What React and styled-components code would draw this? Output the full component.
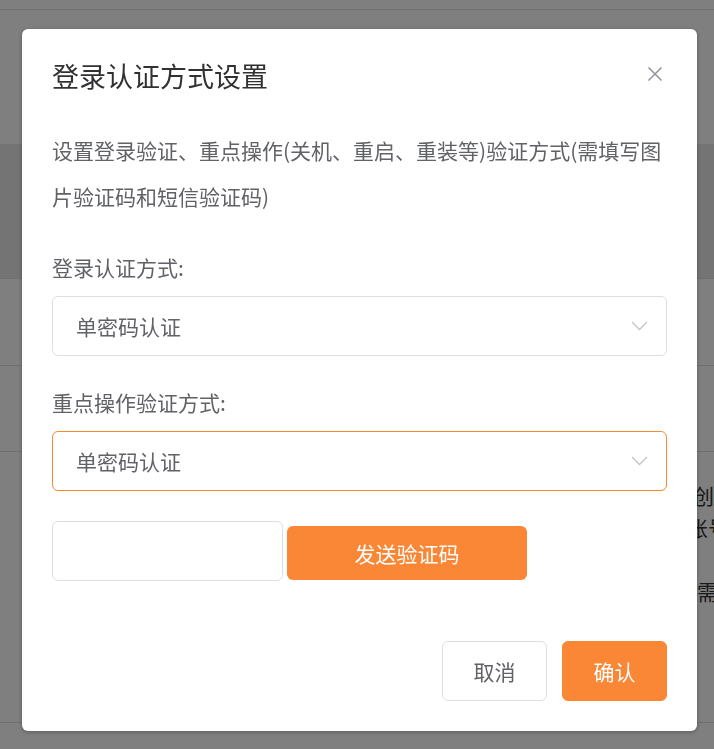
import React from 'react';
import styled, { createGlobalStyle } from 'styled-components';

const Global = createGlobalStyle`
  html, body { margin: 0; padding: 0; background: #fff; }
  body { font-family: "Noto Sans CJK SC", "Noto Sans", sans-serif; }
  * { box-sizing: border-box; }
`;

const ORANGE = '#fa8736';

/* underlying page */
const Page = styled.div`
  width: 714px;
  min-height: 749px;
  background: #fff;
  display: flex;
  flex-direction: column;
`;
const PageTop = styled.div`
  height: 10px;
  border-bottom: 1px solid #dcdcdc;
`;
const PageIntro = styled.div`
  height: 134px;
`;
const PageBand = styled.div`
  height: 135px;
  background: #e9e9e9;
  border-bottom: 1px solid #dcdfe6;
`;
const PageRow = styled.div`
  height: ${(p) => p.$h}px;
  border-bottom: 1px solid #dcdfe6;
  display: flex;
  flex-direction: column;
  padding-top: ${(p) => p.$pt || 0}px;
  overflow: hidden;
`;
const PageLine = styled.div`
  padding-left: ${(p) => p.$indent}px;
  height: 32px;
  font-size: 21px;
  line-height: 32px;
  color: #333;
  white-space: nowrap;
`;

/* modal */
const Overlay = styled.div`
  position: fixed;
  inset: 0;
  background: rgba(0, 0, 0, 0.5);
  display: flex;
  align-items: flex-start;
  padding: 29px 0 0 22px;
`;
const Dialog = styled.div`
  width: 675px;
  background: #fff;
  border-radius: 6px;
  box-shadow: 0 1px 4px rgba(0, 0, 0, 0.3);
  padding: 30px;
  display: flex;
  flex-direction: column;
`;
const Header = styled.div`
  display: flex;
  justify-content: space-between;
  align-items: center;
  height: 34px;
`;
const Title = styled.h2`
  margin: 0;
  font-size: 27px;
  font-weight: 400;
  line-height: 34px;
  color: #303133;
`;
const CloseButton = styled.button`
  border: 0;
  background: none;
  padding: 0;
  margin-right: 4px;
  margin-top: -4px;
  width: 16px;
  height: 16px;
  display: flex;
  cursor: pointer;
`;
const Description = styled.p`
  margin: 34px 0 0;
  font-size: 21px;
  line-height: 46px;
  color: #606266;
`;
const Label = styled.div`
  margin-top: ${(p) => p.$mt}px;
  font-size: 21px;
  line-height: 30px;
  color: #606266;
`;
const Select = styled.div`
  margin-top: 14px;
  height: 60px;
  border: 1px solid ${(p) => (p.$active ? ORANGE : '#dcdfe6')};
  border-radius: 6px;
  padding: 0 18px 0 23px;
  display: flex;
  align-items: center;
  justify-content: space-between;
  font-size: 21px;
  color: #606266;
`;
const VerifyRow = styled.div`
  margin-top: 30px;
  display: flex;
  align-items: flex-start;
  gap: 4px;
`;
const CodeInput = styled.input`
  width: 231px;
  height: 60px;
  border: 1px solid #dcdfe6;
  border-radius: 6px;
  outline: none;
  font-size: 21px;
  padding: 0 15px;
`;
const SendButton = styled.button`
  margin-top: 5px;
  width: 240px;
  height: 54px;
  border: 0;
  border-radius: 6px;
  background: ${ORANGE};
  color: #fff;
  font-family: inherit;
  font-size: 21px;
  cursor: pointer;
`;
const Footer = styled.div`
  margin-top: 60px;
  display: flex;
  justify-content: flex-end;
  gap: 15px;
`;
const FooterButton = styled.button`
  width: 105px;
  height: 60px;
  border-radius: 6px;
  border: 1px solid ${(p) => (p.$primary ? ORANGE : '#dcdfe6')};
  background: ${(p) => (p.$primary ? ORANGE : '#fff')};
  color: ${(p) => (p.$primary ? '#fff' : '#606266')};
  font-family: inherit;
  font-size: 21px;
  cursor: pointer;
`;

const Chevron = () => (
  <svg width="17" height="10" viewBox="0 0 17 10" fill="none">
    <path d="M1 1 L8.5 8.5 L16 1" stroke="#c0c4cc" strokeWidth="1.3" />
  </svg>
);

const CloseIcon = () => (
  <svg width="16" height="16" viewBox="0 0 16 16" fill="none">
    <path d="M1.5 1.5 L14.5 14.5 M14.5 1.5 L1.5 14.5" stroke="#909399" strokeWidth="1.5" />
  </svg>
);

export default function App() {
  return (
    <>
      <Global />
      <Page>
        <PageTop />
        <PageIntro />
        <PageBand />
        <PageRow $h={87} />
        <PageRow $h={86} />
        <PageRow $h={271} $pt={27}>
          <PageLine $indent={672}>新创</PageLine>
          <PageLine $indent={666}>的账号</PageLine>
          <PageLine $indent={697} />
          <PageLine $indent={697}>需</PageLine>
        </PageRow>
      </Page>
      <Overlay>
        <Dialog>
          <Header>
            <Title>登录认证方式设置</Title>
            <CloseButton aria-label="关闭">
              <CloseIcon />
            </CloseButton>
          </Header>
          <Description>
            设置登录验证、重点操作(关机、重启、重装等)验证方式(需填写图片验证码和短信验证码)
          </Description>
          <Label $mt={33}>登录认证方式:</Label>
          <Select>
            <span>单密码认证</span>
            <Chevron />
          </Select>
          <Label $mt={31}>重点操作验证方式:</Label>
          <Select $active>
            <span>单密码认证</span>
            <Chevron />
          </Select>
          <VerifyRow>
            <CodeInput />
            <SendButton>发送验证码</SendButton>
          </VerifyRow>
          <Footer>
            <FooterButton>取消</FooterButton>
            <FooterButton $primary>确认</FooterButton>
          </Footer>
        </Dialog>
      </Overlay>
    </>
  );
}
